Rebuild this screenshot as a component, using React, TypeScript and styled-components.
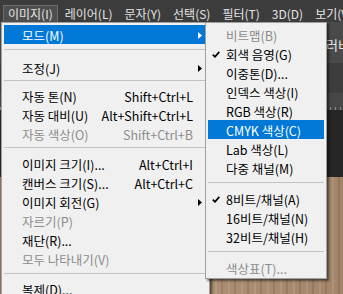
import React from "react";
import styled, { createGlobalStyle } from "styled-components";

const GlobalStyle = createGlobalStyle`
  html, body {
    margin: 0;
    padding: 0;
    background: #3c3c3c;
  }
`;

const Screen = styled.div`
  position: relative;
  width: 343px;
  height: 294px;
  overflow: hidden;
  display: flex;
  flex-direction: column;
  font-family: "Noto Sans CJK KR", "Liberation Sans", sans-serif;
  font-size: 12.5px;
`;

// top menu bar
const MenuBar = styled.div`
  display: flex;
  gap: 2px;
  height: 22px;
  box-sizing: border-box;
  padding: 5px 0 0 3px;
  background: #3c3c3c;
  flex-shrink: 0;
  white-space: nowrap;
  font-size: 12px;
`;

const BarItem = styled.div<{ $open?: boolean }>`
  height: 17px;
  box-sizing: border-box;
  padding: 0 4px;
  line-height: 16px;
  color: #e4e4e4;
  border: 1px solid ${p => (p.$open ? "#6c6c6c" : "transparent")};
  border-bottom: none;
  background: ${p => (p.$open ? "#4e4e4e" : "transparent")};
`;

// panels behind the menus
const Workspace = styled.div`
  flex: 1;
  display: flex;
  flex-direction: column;
`;

const OptionsBar = styled.div`
  height: 41px;
  flex-shrink: 0;
  background: #4a4a4a;
  color: #ececec;
  padding: 13px 0 0 326px;
  box-sizing: border-box;
  white-space: nowrap;
  font-size: 13px;
`;

const TabStrip = styled.div`
  height: 30px;
  flex-shrink: 0;
  background: #3d3d3d;
`;

const Ruler = styled.div`
  height: 17px;
  flex-shrink: 0;
  background-color: #474747;
  background-image: repeating-linear-gradient(
    90deg,
    #8a8a8a 0 1px,
    transparent 1px 5px
  );
  background-size: 100% 3px;
  background-repeat: no-repeat;
  background-position: 0 14px;
`;

const DarkCanvas = styled.div`
  height: 67px;
  flex-shrink: 0;
  background: #262626;
`;

const Wood = styled.div`
  flex: 1;
  background-color: #a88a6b;
  background-image: repeating-linear-gradient(
      90deg,
      rgba(90, 60, 30, 0.18) 0 2px,
      transparent 2px 7px,
      rgba(255, 230, 200, 0.12) 7px 9px,
      transparent 9px 13px
    ),
    linear-gradient(90deg, #9c7f61, #b0947a 40%, #a2856a);
`;

// dropdown menus
const DropMenu = styled.div<{ $left: number; $width: number }>`
  position: absolute;
  top: 22px;
  left: ${p => p.$left}px;
  width: ${p => p.$width}px;
  box-sizing: border-box;
  padding: 2px 2px 1px;
  background: #f0f0f0;
  border: 1px solid #a0a0a0;
  box-shadow: 2px 2px 2px rgba(0, 0, 0, 0.5);
`;

const Item = styled.div<{ $active?: boolean; $disabled?: boolean }>`
  display: flex;
  align-items: center;
  height: 19px;
  box-sizing: border-box;
  padding-top: 1px;
  white-space: nowrap;
  background: ${p => (p.$active ? "#0078d7" : "transparent")};
  color: ${p => (p.$active ? "#ffffff" : p.$disabled ? "#8c8c8c" : "#000000")};
`;

const Lead = styled.span`
  width: 18px;
  flex-shrink: 0;
  display: flex;
  align-items: center;
  padding-left: 4px;
  box-sizing: border-box;
`;

const Label = styled.span`
  flex: 1;
`;

const Shortcut = styled.span`
  text-align: right;
`;

const ArrowCell = styled.span`
  width: 14px;
  flex-shrink: 0;
  display: flex;
  align-items: center;
  padding-left: 5px;
  box-sizing: border-box;
`;

const Sep = styled.div<{ $top: number; $bottom: number }>`
  height: 1px;
  background: #c2c2c2;
  margin: ${p => p.$top}px 0 ${p => p.$bottom}px;
`;

const Arrow = ({ color }: { color: string }) => (
  <svg width="4" height="7" viewBox="0 0 4 7">
    <polygon points="0,0 4,3.5 0,7" fill={color} />
  </svg>
);

const Check = () => (
  <svg width="8" height="7" viewBox="0 0 8 7">
    <path d="M0.8 3.6 L3 5.8 L7.3 0.9" stroke="#000" strokeWidth="1.7" fill="none" />
  </svg>
);

interface IMenuRow {
  label: string;
  shortcut?: string;
  disabled?: boolean;
  active?: boolean;
  sub?: boolean;
  checked?: boolean;
  sep?: [number, number];
}

const imageMenu: Array<IMenuRow> = [
  { label: "모드(M)", active: true, sub: true, sep: [5, 8] },
  { label: "조정(J)", sub: true, sep: [3, 5] },
  { label: "자동 톤(N)", shortcut: "Shift+Ctrl+L" },
  { label: "자동 대비(U)", shortcut: "Alt+Shift+Ctrl+L" },
  { label: "자동 색상(O)", shortcut: "Shift+Ctrl+B", disabled: true, sep: [4, 6] },
  { label: "이미지 크기(I)...", shortcut: "Alt+Ctrl+I" },
  { label: "캔버스 크기(S)...", shortcut: "Alt+Ctrl+C" },
  { label: "이미지 회전(G)", sub: true },
  { label: "자르기(P)", disabled: true },
  { label: "재단(R)..." },
  { label: "모두 나타내기(V)", disabled: true, sep: [5, 5] },
  { label: "복제(D)..." },
  { label: "연산 적용(Y)..." },
];

const modeMenu: Array<IMenuRow> = [
  { label: "비트맵(B)", disabled: true },
  { label: "회색 음영(G)", checked: true },
  { label: "이중톤(D)..." },
  { label: "인덱스 색상(I)" },
  { label: "RGB 색상(R)" },
  { label: "CMYK 색상(C)", active: true },
  { label: "Lab 색상(L)" },
  { label: "다중 채널(M)", sep: [5, 6] },
  { label: "8비트/채널(A)", checked: true },
  { label: "16비트/채널(N)" },
  { label: "32비트/채널(H)", sep: [5, 6] },
  { label: "색상표(T)...", disabled: true },
];

const topMenus = ["이미지(I)", "레이어(L)", "문자(Y)", "선택(S)", "필터(T)", "3D(D)", "보기(V)"];

const MenuRows = ({ rows, arrows }: { rows: Array<IMenuRow>; arrows: boolean }) => (
  <>
    {rows.map((row, idx) => (
      <React.Fragment key={idx}>
        <Item $active={row.active} $disabled={row.disabled}>
          <Lead>{row.checked && <Check />}</Lead>
          <Label>{row.label}</Label>
          {row.shortcut && <Shortcut>{row.shortcut}</Shortcut>}
          {arrows && (
            <ArrowCell>{row.sub && <Arrow color={row.active ? "#ffffff" : "#000000"} />}</ArrowCell>
          )}
        </Item>
        {row.sep && <Sep $top={row.sep[0]} $bottom={row.sep[1]} />}
      </React.Fragment>
    ))}
  </>
);

const App: React.FC = () => {
  return (
    <Screen>
      <GlobalStyle />
      <MenuBar>
        {topMenus.map((name, idx) => (
          <BarItem key={idx} $open={idx === 0}>
            {name}
          </BarItem>
        ))}
      </MenuBar>
      <Workspace>
        <OptionsBar>러비</OptionsBar>
        <TabStrip />
        <Ruler />
        <DarkCanvas />
        <Wood />
      </Workspace>
      <DropMenu $left={1} $width={209}>
        <MenuRows rows={imageMenu} arrows={true} />
      </DropMenu>
      <DropMenu $left={205} $width={122}>
        <MenuRows rows={modeMenu} arrows={false} />
      </DropMenu>
    </Screen>
  );
};

export default App;
